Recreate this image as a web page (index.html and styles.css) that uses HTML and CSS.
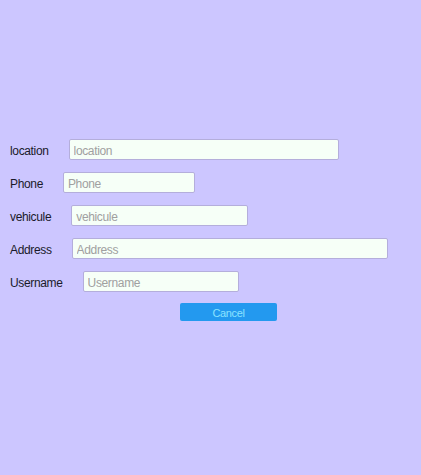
FILE: index.html
```html
<!DOCTYPE html>
<html>
<head>
<meta charset="utf-8">
<link rel="stylesheet" href="styles.css">
</head>
<body>
<form class="form">
  <div class="row"><label class="lbl">location</label><input class="field w-location" placeholder="location"></div>
  <div class="row"><label class="lbl">Phone</label><input class="field w-phone" placeholder="Phone"></div>
  <div class="row"><label class="lbl">vehicule</label><input class="field w-vehicule" placeholder="vehicule"></div>
  <div class="row"><label class="lbl">Address</label><input class="field w-address" placeholder="Address"></div>
  <div class="row"><label class="lbl">Username</label><input class="field w-username" placeholder="Username"></div>
  <div class="actions"><button type="button" class="btn">Cancel</button></div>
</form>
</body>
</html>
```
FILE: styles.css
```css
html, body {
  margin: 0;
  padding: 0;
  background: #ccc6ff;
  height: 100%;
}
body {
  font-family: "Liberation Sans", Arial, sans-serif;
  font-size: 12px;
  letter-spacing: -0.35px;
  color: #111;
}
.form {
  padding: 139px 0 0 10px;
  display: flex;
  flex-direction: column;
  gap: 12px;
}
.row {
  display: flex;
  align-items: center;
  gap: 20px;
  height: 21px;
}
.lbl {
  color: #1a1a2a;
  padding-top: 3px;
}
.field {
  box-sizing: border-box;
  height: 21px;
  margin: 0;
  padding: 3px 4px 0;
  border: 1px solid #b4aedb;
  border-radius: 2px;
  background: #f6fff7;
  font-family: "Liberation Sans", Arial, sans-serif;
  font-size: 12px;
  letter-spacing: -0.35px;
  color: #333;
  outline: none;
}
.field::placeholder {
  color: #a0a0a0;
}
.w-location { width: 270px; }
.w-phone { width: 132px; }
.w-vehicule { width: 177px; }
.w-address { width: 316px; }
.w-username { width: 156px; }
.actions {
  padding-left: 170px;
  margin-top: -1px;
}
.btn {
  box-sizing: border-box;
  width: 97px;
  height: 18px;
  margin: 0;
  padding: 1px 0 0;
  border: none;
  border-radius: 2px;
  background: #2399ef;
  color: #8be3ff;
  font-family: "Liberation Sans", Arial, sans-serif;
  font-size: 11px;
  letter-spacing: -0.35px;
}
```
